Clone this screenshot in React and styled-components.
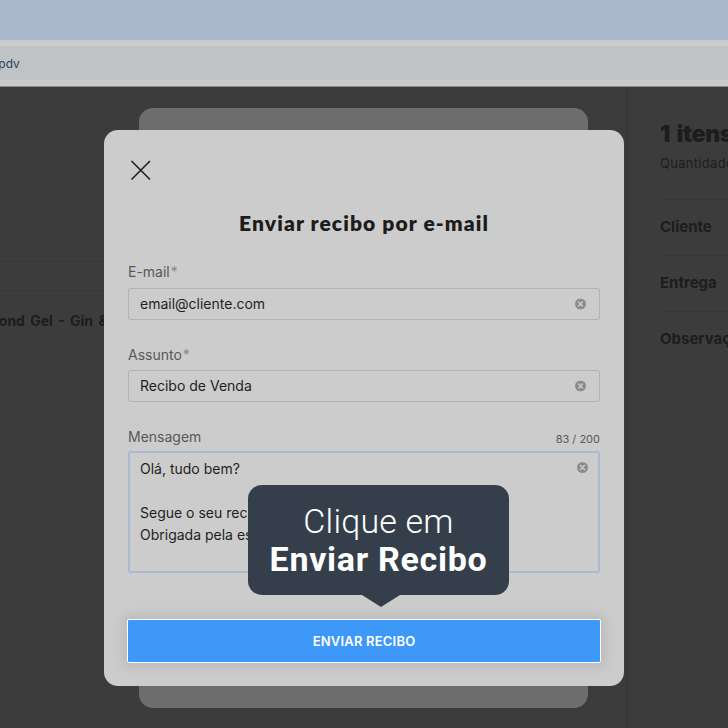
import styled, { createGlobalStyle } from 'styled-components';

const GlobalStyle = createGlobalStyle`
    html, body {
        margin: 0;
        padding: 0;
        background: #3c3c3c;
    }
    body {
        font-family: Inter, "Liberation Sans", sans-serif;
    }
`;

const Screen = styled.div`
    position: relative;
    width: 728px;
    height: 728px;
    overflow: hidden;
    display: flex;
    flex-direction: column;
    background: #3c3c3c;
`;

const TabStrip = styled.div`
    height: 40px;
    background: #a9b7cb;
    border-bottom: 6px solid #cbcbcb;
`;

const AddressBar = styled.div`
    height: 34px;
    background: #c0c3c6;
    border-bottom: 6px solid #cbcbcb;
    display: flex;
    align-items: center;
    font-size: 12px;
    color: #2f3d57;
    white-space: nowrap;
    span {
        margin-left: -6px;
    }
`;

const Workspace = styled.div`
    flex: 1;
    display: flex;
    border-top: 1px solid #8d8d8d;
    background: #3c3c3c;
`;

const SaleArea = styled.div`
    flex-shrink: 0;
    width: 628px;
    box-sizing: border-box;
    border-right: 1px solid #333333;
    display: flex;
    flex-direction: column;
    padding-top: 174px;
    overflow: hidden;
`;

const Divider = styled.div`
    height: ${({ $height }) => $height}px;
    border-top: 1px solid #363636;
`;

const ItemName = styled.div`
    font-size: 14px;
    font-weight: 700;
    color: #1d1d1d;
    white-space: nowrap;
    margin-left: -36px;
    margin-top: -9px;
    word-spacing: 2px;
`;

const SummaryPanel = styled.div`
    flex: 1;
    min-width: 0;
    overflow: hidden;
    padding: 33px 0 0 32px;
    white-space: nowrap;
    color: #1d1d1d;
`;

const ItemCount = styled.div`
    font-size: 23px;
    font-weight: 900;
    line-height: 28px;
    letter-spacing: -0.3px;
    word-spacing: 2px;
`;

const Quantity = styled.div`
    font-size: 13px;
    line-height: 16px;
    margin-top: 7px;
    padding-bottom: 28px;
    letter-spacing: 0.3px;
`;

const SummaryRow = styled.div`
    height: 56px;
    box-sizing: border-box;
    border-top: 1px solid #373737;
    display: flex;
    align-items: center;
    padding-bottom: 2px;
    font-size: 15px;
    font-weight: 700;
`;

/* modal layer */

const Overlay = styled.div`
    position: absolute;
    inset: 0;
    isolation: isolate;
    padding: 130px 0 0 104px;
`;

const Modal = styled.div`
    position: relative;
    width: 520px;
    height: 556px;
    box-sizing: border-box;
    padding: 0 24px;
    display: flex;
    flex-direction: column;
    background: #cccccc;
    border-radius: 14px;
`;

const StackedCard = styled.div`
    position: absolute;
    top: -22px;
    bottom: -22px;
    left: 35px;
    right: 36px;
    z-index: -1;
    background: #6d6d6d;
    border-radius: 14px;
`;

const CloseButton = styled.button`
    margin: 29px 0 0 1px;
    padding: 0;
    width: 22px;
    height: 22px;
    border: none;
    background: none;
    display: flex;
`;

const Title = styled.h2`
    margin: 28px 0 0;
    text-align: center;
    font-family: Lato, "Liberation Sans", sans-serif;
    font-size: 21px;
    font-weight: 800;
    line-height: 28px;
    letter-spacing: 1.1px;
    color: #1c1c1c;
`;

const Field = styled.div`
    display: flex;
    flex-direction: column;
    margin-top: ${({ $gap }) => $gap}px;
`;

const LabelRow = styled.div`
    display: flex;
    justify-content: space-between;
    align-items: flex-end;
    margin-bottom: ${({ $space }) => $space}px;
`;

const Label = styled.label`
    font-size: 14px;
    line-height: 20px;
    color: #585858;
    sup {
        font-size: 14px;
        color: #8a8a8a;
        vertical-align: 0;
        margin-left: 1px;
    }
`;

const Counter = styled.span`
    font-size: 11px;
    line-height: 16px;
    color: #5a5a5a;
`;

const InputBox = styled.div`
    position: relative;
    height: ${({ $height }) => $height}px;
    box-sizing: border-box;
    border: ${({ $focused }) => ($focused ? '2px solid #a9b9d0' : '1px solid #b3b3b3')};
    border-radius: 2px;
    padding: ${({ $focused }) => ($focused ? '5px 40px 0 10px' : '0 40px 0 11px')};
    display: flex;
    flex-direction: column;
    justify-content: ${({ $focused }) => ($focused ? 'flex-start' : 'center')};
    font-size: 14px;
    line-height: 22px;
    color: #1f1f1f;
`;

const ClearIcon = styled.span`
    position: absolute;
    right: ${({ $right }) => $right}px;
    top: ${({ $top }) => ($top == null ? '50%' : `${$top}px`)};
    transform: ${({ $top }) => ($top == null ? 'translateY(-50%)' : 'none')};
    width: 11px;
    height: 11px;
    display: flex;
`;

const SubmitButton = styled.button`
    margin: 46px -1px 0;
    height: 44px;
    box-sizing: border-box;
    border: 1px solid #ffffff;
    border-radius: 2px;
    background: #3d98f7;
    color: #ffffff;
    font-family: Inter, "Liberation Sans", sans-serif;
    font-size: 13px;
    font-weight: 600;
    letter-spacing: 0.2px;
    box-shadow: 0 0 12px 4px rgba(0, 0, 0, 0.09);
`;

const Tooltip = styled.div`
    position: absolute;
    left: 144px;
    top: 355px;
    width: 261px;
    height: 110px;
    box-sizing: border-box;
    border-radius: 14px;
    background: #343f4b;
    color: #ffffff;
    font-family: Roboto, "Liberation Sans", sans-serif;
    font-size: 34px;
    line-height: 38px;
    text-align: center;
    display: flex;
    flex-direction: column;
    justify-content: center;
    padding-bottom: 1px;
    &::after {
        content: '';
        position: absolute;
        left: 50%;
        bottom: -12px;
        margin-left: -17px;
        border-left: 19px solid transparent;
        border-right: 19px solid transparent;
        border-top: 12px solid #343f4b;
    }
`;

const TooltipLine = styled.span`
    font-weight: ${({ $strong }) => ($strong ? 700 : 300)};
    letter-spacing: ${({ $strong }) => ($strong ? '0.7px' : '0.2px')};
`;

function Clear({ right, top }) {
    return (
        <ClearIcon $right={right} $top={top}>
            <svg width="11" height="11" viewBox="0 0 11 11">
                <circle cx="5.5" cy="5.5" r="5.5" fill="#8c8c8c" />
                <path d="M3.6 3.6 7.4 7.4 M7.4 3.6 3.6 7.4" stroke="#cccccc" strokeWidth="1.4" strokeLinecap="round" />
            </svg>
        </ClearIcon>
    );
}

export default function App() {
    return <>
        <GlobalStyle />
        <Screen>
            <TabStrip />
            <AddressBar><span>/pdv</span></AddressBar>
            <Workspace>
                <SaleArea>
                    <Divider $height={28} />
                    <Divider $height={30} />
                    <ItemName>Diamond Gel - Gin &amp; Tônica</ItemName>
                </SaleArea>
                <SummaryPanel>
                    <ItemCount>1 itens</ItemCount>
                    <Quantity>Quantidade</Quantity>
                    <SummaryRow>Cliente</SummaryRow>
                    <SummaryRow>Entrega</SummaryRow>
                    <SummaryRow>Observações</SummaryRow>
                </SummaryPanel>
            </Workspace>

            <Overlay>
                <Modal>
                    <StackedCard />
                    <CloseButton aria-label="Fechar">
                        <svg width="22" height="22" viewBox="0 0 22 22">
                            <path d="M2.5 2 21 20.5 M21 2 2.5 20.5" stroke="#1f1f1f" strokeWidth="1.6" />
                        </svg>
                    </CloseButton>
                    <Title>Enviar recibo por e-mail</Title>

                    <Field $gap={25}>
                        <LabelRow $space={6}>
                            <Label>E-mail<sup>*</sup></Label>
                        </LabelRow>
                        <InputBox $height={32}>
                            email@cliente.com
                            <Clear right={13} />
                        </InputBox>
                    </Field>

                    <Field $gap={25}>
                        <LabelRow $space={5}>
                            <Label>Assunto<sup>*</sup></Label>
                        </LabelRow>
                        <InputBox $height={32}>
                            Recibo de Venda
                            <Clear right={13} />
                        </InputBox>
                    </Field>

                    <Field $gap={25}>
                        <LabelRow $space={4}>
                            <Label>Mensagem</Label>
                            <Counter>83 / 200</Counter>
                        </LabelRow>
                        <InputBox $height={122} $focused>
                            <span>Olá, tudo bem?</span>
                            <span>&nbsp;</span>
                            <span>Segue o seu recibo de compra.</span>
                            <span>Obrigada pela escolha!</span>
                            <Clear right={10} top={9} />
                        </InputBox>
                    </Field>

                    <SubmitButton>ENVIAR RECIBO</SubmitButton>

                    <Tooltip>
                        <TooltipLine>Clique em</TooltipLine>
                        <TooltipLine $strong>Enviar Recibo</TooltipLine>
                    </Tooltip>
                </Modal>
            </Overlay>
        </Screen>
    </>;
}
